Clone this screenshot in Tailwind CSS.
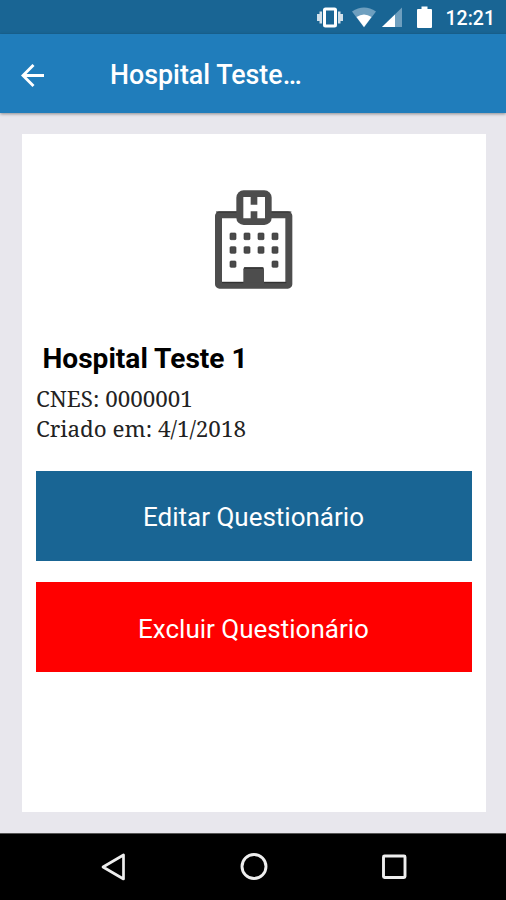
<!DOCTYPE html>
<html lang="pt-BR">

<head>
    <meta charset="UTF-8">
    <meta name="viewport" content="width=device-width, initial-scale=1.0">
    <title>Hospital Teste 1</title>
    <script src="https://cdn.jsdelivr.net/npm/@tailwindcss/browser@4"></script>
</head>

<body class="flex h-screen flex-col overflow-hidden bg-[#e8e7ed] font-[Roboto,sans-serif]">
    <!-- Status bar -->
    <div class="flex h-[34px] shrink-0 items-center justify-end bg-[#196594] pr-[11px] text-white">
        <svg class="mr-[7px] h-[26px] w-[28px]" viewBox="0 0 28 26" fill="none">
            <path d="M6 7.500H3.500V10H1v7h2.500v2.500H6zM22 7.500h2.500V10H27v7h-2.500v2.500H22z" fill="#fff" opacity=".8" />
            <rect x="8.500" y="5" width="11" height="17" rx="1" stroke="#fff" stroke-width="3" />
        </svg>
        <svg class="mr-1 h-[26px] w-[26px]" viewBox="0 0 26 26">
            <path d="M1 7.500Q13-.5 25 7.500L13 23.500z" fill="#6e9fbf" />
            <path d="M5.500 13Q13 8 20.500 13L13 23z" fill="#fff" />
        </svg>
        <svg class="mr-[15px] h-[26px] w-[21px]" viewBox="0 0 21 26">
            <path d="M21 3.500V23H1z" fill="#6e9fbf" />
            <path d="M14 10.500V23H1z" fill="#fff" />
        </svg>
        <svg class="mr-[14px] h-[26px] w-[15px]" viewBox="0 0 15 26">
            <path d="M4.500 2.500h6v2.500H14q1 0 1 1v17q0 1-1 1H1q-1 0-1-1V6q0-1 1-1h3.500z" fill="#fff" />
        </svg>
        <span class="pt-[3px] text-[19.500px] leading-none font-medium">12:21</span>
    </div>

    <!-- Toolbar -->
    <header class="z-10 flex h-[79px] shrink-0 items-center bg-[#207dbb] pt-1 pl-[21px] text-white shadow-[0_1px_3px_rgba(0,0,0,0.4)]">
        <svg class="h-6 w-6" viewBox="0 0 24 24" fill="none" stroke="#fff" stroke-width="2.900">
            <path d="M23 11.500H2.500M12.500 1L2 11.500 12.500 22" />
        </svg>
        <h1 class="ml-[65px] text-[26.800px] leading-none font-medium whitespace-nowrap">Hospital Teste…</h1>
    </header>

    <main class="flex grow px-[22px] pt-[21px] pr-[20px] pb-[21px]">
        <section class="w-full bg-white px-[14px] pt-[46px]">
            <!-- Hospital building -->
            <svg class="ml-[168px] h-[120px] w-[100px]" viewBox="0 0 300 360">
                <rect x="43.500" y="104.500" width="211" height="211" rx="3" fill="#fff" stroke="#4d4d4d" stroke-width="21" />
                <path d="M36 96h226M54 308h64M180 308h67" stroke="#2e2e2e" stroke-width="3" />
                <rect x="97" y="31" width="106" height="104" rx="22" fill="#4d4d4d" />
                <path d="M118 51h22v23h20V51h23v64h-23V94h-20v21h-22z" fill="#fff" />
                <path d="M118 307v-39q0-6 6-6h50q6 0 6 6v39z" fill="#4d4d4d" />
                <path d="M120 264h58" stroke="#2e2e2e" stroke-width="4" />
                <g fill="#4a4a4a" stroke="#383838" stroke-width="2">
                    <rect x="78" y="159" width="18" height="20" rx="3" />
                    <rect x="120" y="159" width="18" height="20" rx="3" />
                    <rect x="162" y="159" width="18" height="20" rx="3" />
                    <rect x="204" y="159" width="18" height="20" rx="3" />
                    <rect x="78" y="200" width="18" height="20" rx="3" />
                    <rect x="120" y="200" width="18" height="20" rx="3" />
                    <rect x="162" y="200" width="18" height="20" rx="3" />
                    <rect x="204" y="200" width="18" height="20" rx="3" />
                    <rect x="78" y="243" width="18" height="19" rx="3" />
                    <rect x="204" y="243" width="18" height="19" rx="3" />
                </g>
            </svg>

            <h2 class="mt-[43px] ml-[6.500px] text-[28.100px] leading-8 font-bold whitespace-nowrap text-black">Hospital Teste 1</h2>
            <div class="mt-[9px] font-['Noto_Serif','DejaVu_Serif_Condensed','DejaVu_Serif',serif] text-[22.400px] leading-[30px] whitespace-nowrap text-[#222]">
                <p>CNES: 0000001</p>
                <p>Criado em: 4/1/2018</p>
            </div>

            <button class="mt-[27px] block h-[90px] w-full bg-[#196594] pt-[3px] pr-[1px] text-[26px] text-white">Editar Questionário</button>
            <button class="mt-[21px] block h-[90px] w-full bg-[#ff0000] pt-[5px] pr-[1px] text-[26px] text-white">Excluir Questionário</button>
        </section>
    </main>

    <!-- Navigation bar -->
    <nav class="flex h-[67px] shrink-0 items-center justify-between border-t border-[#555] bg-black pr-[98px] pl-[99px]">
        <svg class="h-7 w-7" viewBox="0 0 28 28" fill="none" stroke="#eee" stroke-width="2.700" stroke-linejoin="round">
            <path d="M24.500 2v24L4 14z" />
        </svg>
        <svg class="h-7 w-7" viewBox="0 0 28 28" fill="none" stroke="#eee" stroke-width="2.900">
            <circle cx="14" cy="13.500" r="12" />
        </svg>
        <svg class="h-7 w-7" viewBox="0 0 28 28" fill="none" stroke="#eee" stroke-width="2.900">
            <rect x="3.500" y="3" width="21.500" height="21.500" rx="1" />
        </svg>
    </nav>
</body>

</html>
